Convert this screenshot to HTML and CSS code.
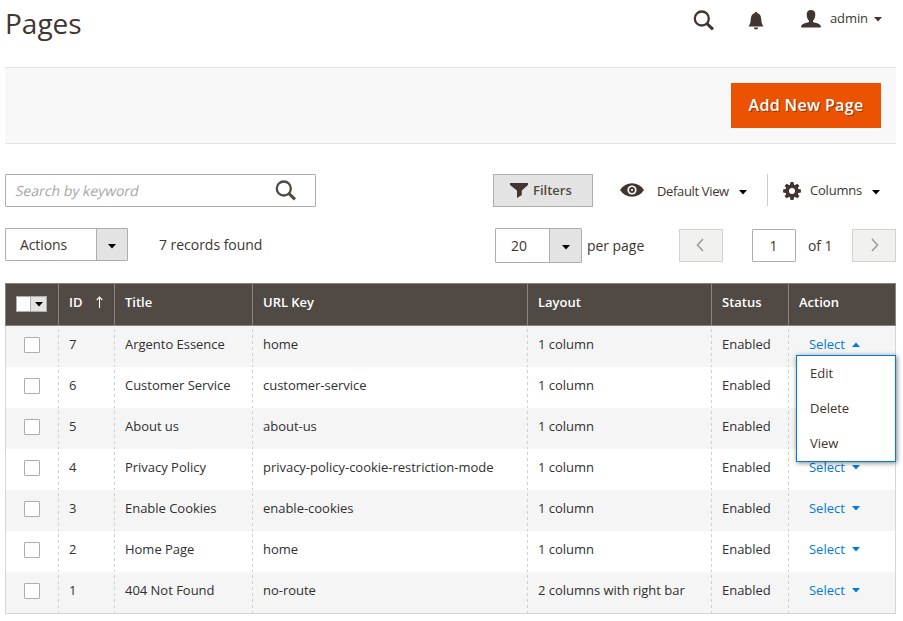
FILE: index.html
```html
<!DOCTYPE html>
<html lang="en">
<head>
<meta charset="utf-8">
<title>Pages</title>
<link rel="stylesheet" href="styles.css">
</head>
<body>
<svg class="defs" width="0" height="0">
  <symbol id="search" viewBox="0 0 22 22"><circle cx="8.8" cy="8.5" r="7" fill="none" stroke="currentColor" stroke-width="2.3"/><path d="M13.7 13.3 20 19.3" fill="none" stroke="currentColor" stroke-width="3"/></symbol>
  <symbol id="down" viewBox="0 0 8 5"><path d="M0 0h8L4 4.6z" fill="currentColor"/></symbol>
</svg>
<header class="header">
  <h1>Pages</h1>
  <div class="header-tools">
    <svg class="search-icon"><use href="#search"/></svg>
    <svg class="bell" viewBox="0 0 16 18"><path d="M8 0c.9 0 1.4.6 1.5 1.3C12 2 13 4 13.2 7c.2 3.500.8 5.500 2.300 7.500H.5C2 12.500 2.600 10.500 2.800 7 3 4 4 2 6.500 1.300 6.600.6 7.100 0 8 0zM5.800 15.500h4.400C10 16.800 9.200 17.500 8 17.500s-2-.7-2.200-2z" fill="currentColor"/></svg>
    <svg class="person" viewBox="0 0 20 18"><path d="M10 0c3 0 4.400 1.800 4.300 4.800-.1 2.700-.9 4.700-2.300 6v1c.5 1.100 7.800 1.500 7.800 4.500V17.500H.2v-1.200C.2 13.300 7.500 12.900 8 11.800v-1C6.600 9.500 5.800 7.500 5.700 4.800 5.600 1.800 7 0 10 0z" fill="currentColor"/></svg>
    <span class="admin">admin</span>
    <svg class="caret"><use href="#down"/></svg>
  </div>
</header>
<section class="page-actions"><button class="primary">Add New Page</button></section>
<div class="toolbar">
  <div class="search-box"><span>Search by keyword</span><svg class="search-icon"><use href="#search"/></svg></div>
  <button class="filters"><svg class="funnel" viewBox="0 0 18 15"><path d="M0 0h18v2l-6.200 5.500V12L7 15V7.500L0 2z" fill="currentColor"/></svg>Filters</button>
  <div class="view">
    <svg class="eye" viewBox="0 0 24 14"><path d="M0 7C3 2.500 7 .3 12 .3S21 2.500 24 7c-3 4.500-7 6.700-12 6.700S3 11.500 0 7z" fill="currentColor"/><circle cx="12" cy="7" r="4.600" fill="#fff"/><circle cx="12" cy="7" r="2.900" fill="currentColor"/><circle cx="12" cy="7" r="1.100" fill="#fff"/></svg>
    <span>Default View</span><svg class="caret"><use href="#down"/></svg>
  </div>
  <div class="columns">
    <svg class="gear" viewBox="-9 -9 18 18"><g fill="currentColor"><circle r="6.500"/><g id="teeth"><path d="M-1.500-8.900h3l.7 3.400h-4.400zM-1.500 8.900h3l.7-3.400h-4.400zM-8.900-1.500v3l3.400.7v-4.400zM8.900-1.500v3L5.500 2.200v-4.400z"/></g><use href="#teeth" transform="rotate(45)"/></g><circle r="3" fill="#fff"/></svg>
    <span>Columns</span><svg class="caret"><use href="#down"/></svg>
  </div>
</div>
<div class="paging">
  <div class="select mass"><span>Actions</span><i><svg class="caret"><use href="#down"/></svg></i></div>
  <span class="records">7 records found</span>
  <div class="select limit"><span>20</span><i><svg class="caret"><use href="#down"/></svg></i></div>
  <span class="per">per page</span>
  <button class="nav prev"><svg viewBox="0 0 8 14"><path d="M7 1 1.500 7 7 13"/></svg></button>
  <span class="current">1</span>
  <span class="of">of 1</span>
  <button class="nav next"><svg viewBox="0 0 8 14"><path d="M1 1 6.500 7 1 13"/></svg></button>
</div>
<main class="grid">
  <div class="row head"><div class="pick"><span class="multi"><b></b><i><svg class="caret"><use href="#down"/></svg></i></span></div><div class="sorted">ID<svg class="arrow" viewBox="0 0 7 12"><path d="M3.500 12V1M.7 4l2.800-3 2.800 3"/></svg></div><div>Title</div><div>URL Key</div><div>Layout</div><div>Status</div><div>Action</div></div>
  <div class="row"><div class="pick"><span class="box"></span></div><div>7</div><div>Argento Essence</div><div>home</div><div>1 column</div><div>Enabled</div><div class="act open">Select<svg class="caret"><use href="#down"/></svg>
    <ul class="menu"><li>Edit</li><li>Delete</li><li>View</li></ul></div></div>
  <div class="row"><div class="pick"><span class="box"></span></div><div>6</div><div>Customer Service</div><div>customer-service</div><div>1 column</div><div>Enabled</div><div class="act"></div></div>
  <div class="row"><div class="pick"><span class="box"></span></div><div>5</div><div>About us</div><div>about-us</div><div>1 column</div><div>Enabled</div><div class="act"></div></div>
  <div class="row"><div class="pick"><span class="box"></span></div><div>4</div><div>Privacy Policy</div><div>privacy-policy-cookie-restriction-mode</div><div>1 column</div><div>Enabled</div><div class="act">Select<svg class="caret"><use href="#down"/></svg></div></div>
  <div class="row"><div class="pick"><span class="box"></span></div><div>3</div><div>Enable Cookies</div><div>enable-cookies</div><div>1 column</div><div>Enabled</div><div class="act">Select<svg class="caret"><use href="#down"/></svg></div></div>
  <div class="row"><div class="pick"><span class="box"></span></div><div>2</div><div>Home Page</div><div>home</div><div>1 column</div><div>Enabled</div><div class="act">Select<svg class="caret"><use href="#down"/></svg></div></div>
  <div class="row"><div class="pick"><span class="box"></span></div><div>1</div><div>404 Not Found</div><div>no-route</div><div>2 columns with right bar</div><div>Enabled</div><div class="act">Select<svg class="caret"><use href="#down"/></svg></div></div>
</main>
</body>
</html>
```
FILE: styles.css
```css
* { box-sizing: border-box; }
body { margin: 0; padding: 0 7px 0 5px; height: 621px; overflow: hidden; background: #fff; color: #41362f; font: 13px/18px "Open Sans", sans-serif; }
svg { display: block; flex: none; }
button { font: inherit; color: inherit; padding: 0; border-radius: 0; }
.defs { position: absolute; }
.caret { width: 8px; height: 5px; }

.header { display: flex; justify-content: space-between; height: 67px; }
h1 { margin: 4px 0 0; font-size: 28px; font-weight: 400; line-height: 38px; }
.header-tools { display: flex; align-items: flex-start; padding-right: 14px; }
.search-icon { width: 22px; height: 22px; }
.header-tools .search-icon { margin-top: 10px; }
.bell { width: 16px; height: 18px; margin: 12px 0 0 33px; }
.person { width: 20px; height: 18px; margin: 10px 0 0 37px; }
.admin { width: 38px; margin: 9px 6px 0 9px; letter-spacing: -.1px; }
.header-tools .caret { margin-top: 17px; }

.page-actions { display: flex; justify-content: flex-end; height: 77px; margin-bottom: 30px; padding: 15px 15px 0 0; border: solid #e3e3e3; border-width: 1px 0; background: #f8f8f8; }
.primary { width: 150px; height: 45px; padding-bottom: 2px; border: 0; background: #eb5202; color: #fff; font-size: 16px; font-weight: 600; letter-spacing: .35px; text-shadow: 1px 1px 0 rgba(0,0,0,.35); }

.toolbar { display: flex; height: 33px; }
.search-box { display: flex; align-items: center; justify-content: space-between; width: 311px; padding: 0 18px 0 10px; border: 1px solid #adadad; border-radius: 1px; color: #a5a5a5; font-size: 14px; }
.search-box span { transform: skewX(-12deg); }
.search-box .search-icon { margin-top: 1px; color: #514943; }
.filters { display: flex; align-items: center; width: 100px; margin-left: 177px; padding: 0 0 2px 16px; border: 1px solid #adadad; background: #e3e3e3; font-weight: 600; color: #514943; }
.funnel { width: 18px; height: 15px; margin: 1px 5px 0 0; color: #41362f; }
.view { display: flex; align-items: center; width: 175px; padding-left: 27px; height: 32px; border-right: 1px solid #ccc; }
.eye { width: 24px; height: 14px; margin-right: 13px; }
.view span { width: 72px; margin: 2px 10px 0 0; letter-spacing: -.35px; white-space: nowrap; }
.view .caret, .columns .caret { margin-top: 4px; color: #000; }
.columns { display: flex; align-items: center; height: 33px; padding-left: 15px; }
.gear { width: 18px; height: 18px; margin-right: 9px; }
.columns span { width: 52px; margin: -2px 10px 0 0; letter-spacing: -.2px; }

.paging { display: flex; height: 35px; margin: 21px 0 20px; font-size: 14px; line-height: 33px; }
.select { display: flex; height: 33px; border: 1px solid #adadad; border-radius: 1px; }
.select span { flex: 1; padding-left: 14px; line-height: 31px; }
.select i { display: flex; align-items: center; justify-content: center; width: 31px; border-left: 1px solid #adadad; background: #e3e3e3; color: #000; }
.mass { width: 123px; }
.mass span { letter-spacing: -.1px; }
.select .caret { margin-top: 3px; }
.records { width: 367px; padding-left: 31px; letter-spacing: -.03px; }
.limit { width: 87px; height: 35px; }
.limit span { padding-left: 15px; line-height: 34px; }
.limit i { width: 32px; }
.per { width: 97px; padding-left: 5px; line-height: 35px; letter-spacing: -.05px; }
.nav { display: flex; align-items: center; justify-content: center; width: 44px; height: 33px; margin-top: 1px; border: 1px solid #d2d2d2; background: #f1f1f0; }
.nav svg { width: 8px; height: 14px; margin: 0 2px 2px 0; fill: none; stroke: #999; stroke-width: 1.5; }
.next svg { margin: 0 0 2px 2px; }
.current { width: 44px; height: 33px; margin: 1px 0 0 29px; padding-right: 1px; border: 1px solid #adadad; border-radius: 1px; line-height: 32px; text-align: center; }
.of { width: 56px; padding-left: 12px; line-height: 35px; letter-spacing: -.1px; }

.grid { width: 891px; }
.row { display: grid; grid-template-columns: 53px 56px 138px 275px 184px 77px 106px; height: 41px; border: solid #d6d6d6; border-width: 0 1px; color: #303030; letter-spacing: -.02px; }
.row:nth-child(even) { background: #f5f5f5; }
.row:last-child { height: 42px; border-bottom-width: 1px; }
.row > div { padding: 9px 0 0 10px; white-space: nowrap; }
.row:not(.head) > div:not(:last-child) { background: repeating-linear-gradient(#d0d0d0 0 3px, transparent 3px 6px) right 3px / 1px 100% no-repeat; }
.head { height: 43px; background: #514943; color: #fff; font-weight: 600; border: 1px solid #8a837f; }
.head > div:not(:last-child) { border-right: 1px solid #8a837f; }
.row > .pick { padding: 11px 0 0 18px; }
.box { display: block; width: 16px; height: 16px; border: 1px solid #adadad; border-radius: 1px; background: #fff; }
.head > .pick { padding: 12px 0 0 10px; }
.multi { display: flex; width: 31px; height: 16px; border: 1px solid #adadad; background: #fff; }
.multi b { flex: 1; }
.multi i { display: flex; align-items: center; justify-content: center; width: 16px; border-left: 1px solid #adadad; background: #e3e3e3; color: #000; }
.multi .caret { margin-top: 1px; }
.sorted { display: flex; }
.arrow { width: 7px; height: 12px; margin: 3px 0 0 14px; fill: none; stroke: #fff; stroke-width: 1.1; }
.row > .act { position: relative; display: flex; padding-left: 20px; color: #007bdb; }
.act .caret { margin: 7px 0 0 7px; }
.open .caret { transform: rotate(180deg); }
.menu { position: absolute; z-index: 1; top: 29px; left: 7px; width: 100px; height: 107px; margin: 0; padding: 0 0 0 13px; list-style: none; border: 1px solid #007bdb; background: #fff; color: #41362f; line-height: 35px; box-shadow: 1px 1px 5px rgba(0,0,0,.5); }
```
